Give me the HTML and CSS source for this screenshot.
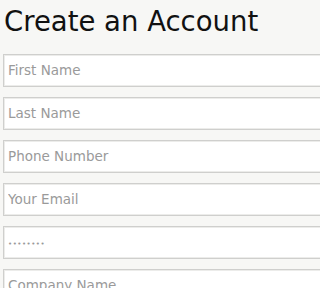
FILE: index.html
```html
<!DOCTYPE html>
<html>
<head>
<meta charset="utf-8">
<link rel="stylesheet" href="styles.css">
</head>
<body>
<div class="page">
  <h1 class="title">Create an Account</h1>
  <form class="form">
    <input class="field" type="text" placeholder="First Name">
    <input class="field" type="text" placeholder="Last Name">
    <input class="field" type="text" placeholder="Phone Number">
    <input class="field" type="email" placeholder="Your Email">
    <input class="field field-pass" type="password" value="secret12">
    <input class="field" type="text" placeholder="Company Name">
  </form>
</div>
</body>
</html>
```
FILE: styles.css
```css
html, body {
  margin: 0;
  padding: 0;
  background: #f7f7f5;
  overflow: hidden;
}
.page {
  height: 288px;
  overflow: hidden;
  padding: 0 0 0 3px;
}
.title {
  margin: 0;
  padding: 3px 0 0 1px;
  font-family: "DejaVu Sans", sans-serif;
  font-weight: 400;
  font-size: 27.5px;
  line-height: 36px;
  color: #111;
  white-space: nowrap;
}
.form {
  display: flex;
  flex-direction: column;
  gap: 10px;
  margin-top: 14.5px;
  width: calc(100% + 40px);
}
.field {
  box-sizing: border-box;
  height: 33px;
  width: 100%;
  flex: none;
  margin: 0;
  padding: 0 4px;
  border: 1px solid #cfcfcd;
  box-shadow: inset 0 0 0 1px #ececea;
  background: #fff;
  font-family: "DejaVu Sans", sans-serif;
  font-size: 13.5px;
  color: #999;
  outline: none;
}
.field::placeholder {
  color: #9a9a9a;
}
.field-pass {
  font-size: 7px;
  letter-spacing: 0.5px;
  color: #999;
  padding-top: 3px;
}
```
